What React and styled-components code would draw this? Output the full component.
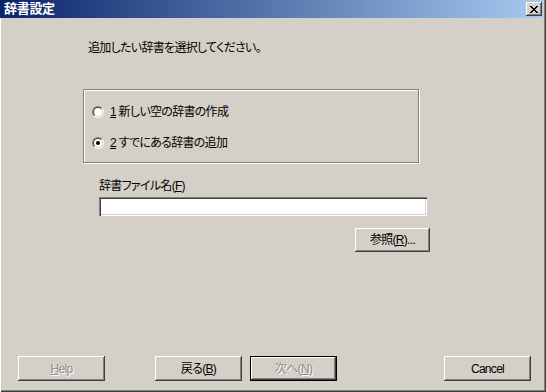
import React from 'react'
import styled, { createGlobalStyle } from 'styled-components'

const GlobalStyle = createGlobalStyle`
  html, body {
    margin: 0;
    padding: 0;
    background: #d4d0c8;
  }
  body {
    font-family: "Liberation Sans", "Noto Sans CJK JP", sans-serif;
    font-size: 12px;
    color: #000;
  }
`

const Window = styled.div`
  width: 546px;
  height: 392px;
  box-sizing: border-box;
  display: flex;
  flex-direction: column;
  background: #d4d0c8;
  box-shadow: inset 1px 0 #ffffff, inset -1px -1px #404040, inset -2px -2px #808080;
  font-feature-settings: "palt";
  letter-spacing: -0.7px;
  overflow: hidden;
`

const TitleBar = styled.div`
  height: 18px;
  margin-right: 3px;
  padding: 0 1px 0 4px;
  display: flex;
  align-items: center;
  justify-content: space-between;
  background: linear-gradient(to right, #0a246a, #a6caf0);
`

const Title = styled.span`
  color: #fff;
  font-weight: bold;
  font-size: 13px;
  letter-spacing: -0.3px;
  line-height: 18px;
`

const CloseButton = styled.button`
  width: 16px;
  height: 14px;
  padding: 0;
  border: 0;
  background: #d4d0c8;
  box-shadow: inset -1px -1px #404040, inset 1px 1px #fff, inset -2px -2px #808080;
  display: flex;
  align-items: center;
  justify-content: center;
`

const Instruction = styled.div`
  margin: 22px 0 0 88px;
  line-height: 16px;
`

const GroupBox = styled.div`
  margin: 33px 0 0 83px;
  width: 336px;
  height: 74px;
  box-sizing: border-box;
  border: 1px solid #808080;
  box-shadow: inset 1px 1px #fff, 1px 1px #fff;
  padding: 14px 0 0 8px;
  display: flex;
  flex-direction: column;
  gap: 15px;
`

const RadioRow = styled.label`
  display: flex;
  align-items: center;
  gap: 6px;
  height: 16px;
  line-height: 16px;
`

const RadioOuter = styled.span`
  width: 12px;
  height: 12px;
  box-sizing: border-box;
  border-radius: 50%;
  border: 1px solid;
  border-color: #808080 #fff #fff #808080;
  display: flex;
`

const RadioInner = styled.span`
  flex: 1;
  border-radius: 50%;
  border: 1px solid;
  border-color: #404040 #d4d0c8 #d4d0c8 #404040;
  background: #fff;
  display: flex;
  align-items: center;
  justify-content: center;
`

const RadioDot = styled.span`
  width: 4px;
  height: 4px;
  border-radius: 50%;
  background: ${p => (p.$on ? '#000' : 'transparent')};
`

const Key = styled.span`
  text-decoration: underline;
`

const FieldLabel = styled.div`
  margin: 15px 0 0 99px;
  line-height: 16px;
`

const FileInput = styled.input`
  margin: 3px 0 0 99px;
  width: 328px;
  height: 19px;
  box-sizing: border-box;
  border: 0;
  outline: none;
  padding: 2px 4px;
  background: #fff;
  font: inherit;
  box-shadow: inset 1px 1px #808080, inset 2px 2px #404040, inset -1px -1px #fff, inset -2px -2px #d4d0c8;
`

const BrowseRow = styled.div`
  margin-top: 12px;
  width: 430px;
  display: flex;
  justify-content: flex-end;
`

const Button = styled.button`
  width: ${p => p.$w}px;
  height: ${p => p.$h}px;
  box-sizing: border-box;
  padding: 0;
  border: ${p => (p.$default ? '1px solid #000' : '0')};
  background: #d4d0c8;
  font: inherit;
  letter-spacing: inherit;
  line-height: 16px;
  color: ${p => (p.disabled ? '#8f8c86' : '#000')};
  text-shadow: ${p => (p.disabled ? '1px 1px #fff' : 'none')};
  box-shadow: inset -1px -1px #404040, inset 1px 1px #fff, inset -2px -2px #808080, inset 2px 2px #d4d0c8;
  margin-left: ${p => p.$ml || 0};
`

const Footer = styled.div`
  margin-top: auto;
  padding: 0 15px 11px 18px;
  display: flex;
  align-items: center;
`

const CloseGlyph = () => (
  <svg width="8" height="7" viewBox="0 0 8 7" shapeRendering="crispEdges">
    <path
      d="M0 0h2v1h-2zM6 0h2v1h-2zM1 1h2v1h-2zM5 1h2v1h-2zM2 2h4v1h-4zM3 3h2v1h-2zM2 4h4v1h-4zM1 5h2v1h-2zM5 5h2v1h-2zM0 6h2v1h-2zM6 6h2v1h-2z"
      fill="#000"
    />
  </svg>
)

const Radio = ({ on }) => (
  <RadioOuter>
    <RadioInner>
      <RadioDot $on={on} />
    </RadioInner>
  </RadioOuter>
)

const App = () => {
  return (
    <>
      <GlobalStyle />
      <Window>
        <TitleBar>
          <Title>辞書設定</Title>
          <CloseButton aria-label="閉じる">
            <CloseGlyph />
          </CloseButton>
        </TitleBar>

        <Instruction>追加したい辞書を選択してください。</Instruction>

        <GroupBox>
          <RadioRow>
            <Radio on={false} />
            <span><Key>1</Key> 新しい空の辞書の作成</span>
          </RadioRow>
          <RadioRow>
            <Radio on />
            <span><Key>2</Key> すでにある辞書の追加</span>
          </RadioRow>
        </GroupBox>

        <FieldLabel>辞書ファイル名(<Key>F</Key>)</FieldLabel>
        <FileInput type="text" />
        <BrowseRow>
          <Button $w={75} $h={24}>参照(<Key>R</Key>)...</Button>
        </BrowseRow>

        <Footer>
          <Button $w={87} $h={25} disabled><Key>H</Key>elp</Button>
          <Button $w={87} $h={25} $ml="50px">戻る(<Key>B</Key>)</Button>
          <Button $w={87} $h={25} $ml="8px" $default disabled>次へ(<Key>N</Key>)</Button>
          <Button $w={87} $h={25} $ml="auto">Cancel</Button>
        </Footer>
      </Window>
    </>
  )
}

export default App
